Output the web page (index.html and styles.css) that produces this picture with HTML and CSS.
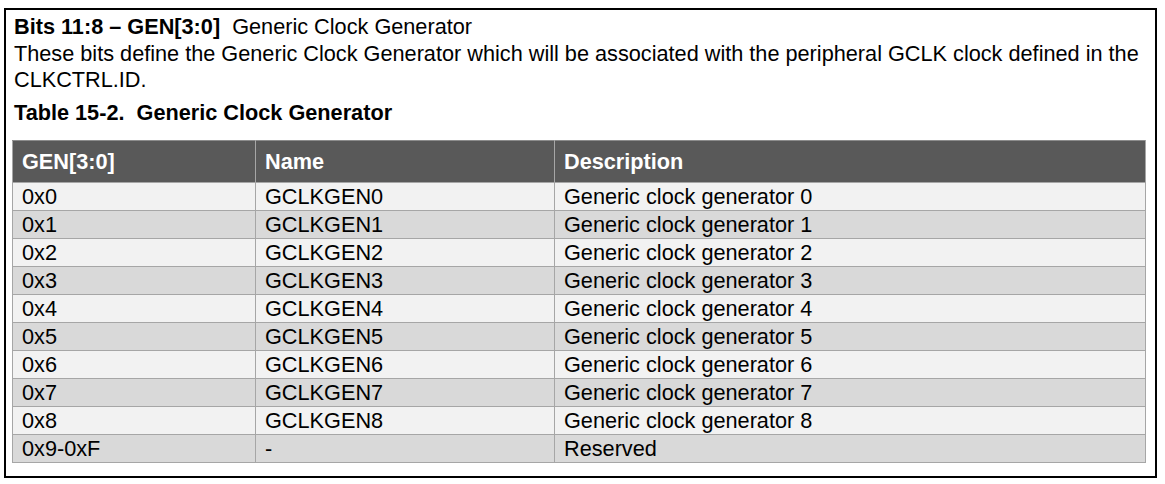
FILE: index.html
```html
<!DOCTYPE html>
<html>
<head>
<meta charset="utf-8">
<link rel="stylesheet" href="styles.css">
</head>
<body>
<div class="frame">
  <p class="line"><b>Bits 11:8 – GEN[3:0]</b>&nbsp; Generic Clock Generator</p>
  <p class="line">These bits define the Generic Clock Generator which will be associated with the peripheral GCLK clock defined in the CLKCTRL.ID.</p>
  <p class="caption">Table 15-2.&nbsp; Generic Clock Generator</p>
  <table class="tbl">
    <colgroup><col class="c1"><col class="c2"><col class="c3"></colgroup>
    <thead>
      <tr><th>GEN[3:0]</th><th>Name</th><th>Description</th></tr>
    </thead>
    <tbody>
      <tr><td>0x0</td><td>GCLKGEN0</td><td>Generic clock generator 0</td></tr>
      <tr><td>0x1</td><td>GCLKGEN1</td><td>Generic clock generator 1</td></tr>
      <tr><td>0x2</td><td>GCLKGEN2</td><td>Generic clock generator 2</td></tr>
      <tr><td>0x3</td><td>GCLKGEN3</td><td>Generic clock generator 3</td></tr>
      <tr><td>0x4</td><td>GCLKGEN4</td><td>Generic clock generator 4</td></tr>
      <tr><td>0x5</td><td>GCLKGEN5</td><td>Generic clock generator 5</td></tr>
      <tr><td>0x6</td><td>GCLKGEN6</td><td>Generic clock generator 6</td></tr>
      <tr><td>0x7</td><td>GCLKGEN7</td><td>Generic clock generator 7</td></tr>
      <tr><td>0x8</td><td>GCLKGEN8</td><td>Generic clock generator 8</td></tr>
      <tr><td>0x9-0xF</td><td>-</td><td>Reserved</td></tr>
    </tbody>
  </table>
</div>
</body>
</html>
```
FILE: styles.css
```css
html, body {
  margin: 0;
  padding: 0;
  background: #ffffff;
}
body {
  padding: 8px 0 0 4px;
  font-family: "Liberation Sans", Arial, sans-serif;
  color: #000;
}
.frame {
  box-sizing: border-box;
  width: 1153px;
  height: 470px;
  border: 2px solid #000;
  padding: 4px 6px 0 6px;
}
.line {
  margin: 0;
  font-size: 21.7px;
  line-height: 26.5px;
  padding-left: 2px;
}
.caption {
  margin: 5.5px 0 0 0;
  padding-left: 2px;
  font-size: 21.7px;
  line-height: 28px;
  font-weight: bold;
}
.tbl {
  margin-top: 13px;
  border-collapse: collapse;
  width: 1133px;
  table-layout: fixed;
  font-size: 21.7px;
}
.c1 { width: 243px; }
.c2 { width: 299px; }
.c3 { width: 591px; }
.tbl th {
  background: #595959;
  color: #fff;
  font-weight: bold;
  text-align: left;
  height: 41px;
  padding: 0 0 0 9px;
  border: 1px solid #a6a6a6;
  border-top-color: #8c8c8c;
  font-size: 21.7px;
}
.tbl td {
  height: 27px;
  padding: 0 0 0 9px;
  border: 1px solid #a6a6a6;
  line-height: 22px;
}
.tbl tbody tr:nth-child(odd) td { background: #f2f2f2; }
.tbl tbody tr:nth-child(even) td { background: #d9d9d9; }
```
